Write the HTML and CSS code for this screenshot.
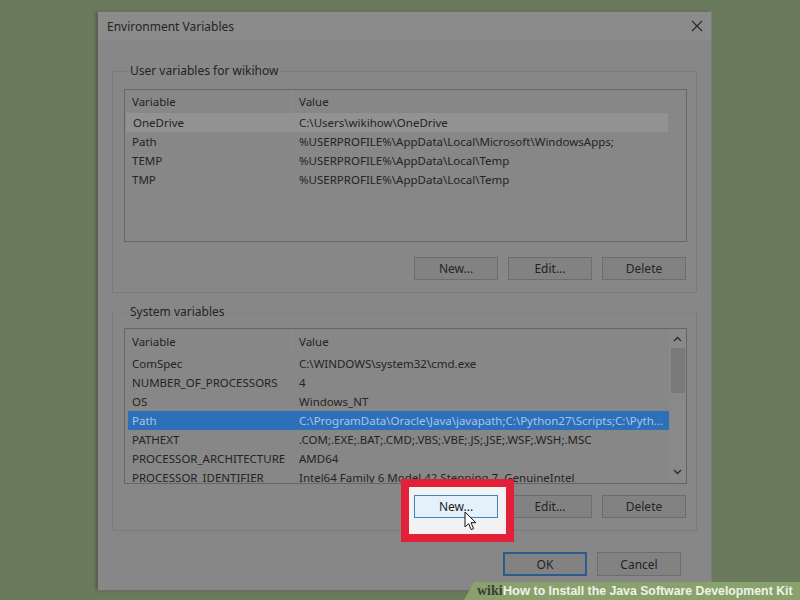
FILE: index.html
```html
<!DOCTYPE html>
<html lang="en">
<head>
  <meta charset="UTF-8" />
  <meta name="viewport" content="width=device-width, initial-scale=1.0" />
  <title>Environment Variables</title>
  <link rel="stylesheet" href="styles.css">
</head>
<body>

  <div class="dialog">
    <div class="titlebar">
      <span>Environment Variables</span>
      <svg class="close" width="12" height="12" viewBox="0 0 12 12">
        <path d="M1 1 L11 11 M11 1 L1 11" stroke="#2b2b2b" stroke-width="1.2" fill="none" />
      </svg>
    </div>

    <div class="content">
      <fieldset class="group">
        <legend>User variables for wikihow</legend>
        <div class="listbox user-list">
          <div class="row head">
            <span class="col-var">Variable</span>
            <span class="col-val">Value</span>
          </div>
          <div class="row hover">
            <span class="col-var">OneDrive</span>
            <span class="col-val">C:\Users\wikihow\OneDrive</span>
          </div>
          <div class="row">
            <span class="col-var">Path</span>
            <span class="col-val">%USERPROFILE%\AppData\Local\Microsoft\WindowsApps;</span>
          </div>
          <div class="row">
            <span class="col-var">TEMP</span>
            <span class="col-val">%USERPROFILE%\AppData\Local\Temp</span>
          </div>
          <div class="row">
            <span class="col-var">TMP</span>
            <span class="col-val">%USERPROFILE%\AppData\Local\Temp</span>
          </div>
        </div>
        <div class="buttons">
          <button>New...</button>
          <button>Edit...</button>
          <button>Delete</button>
        </div>
      </fieldset>

      <fieldset class="group system">
        <legend>System variables</legend>
        <div class="listbox system-list">
          <div class="rows">
            <div class="row head">
              <span class="col-var">Variable</span>
              <span class="col-val">Value</span>
            </div>
            <div class="row">
              <span class="col-var">ComSpec</span>
              <span class="col-val">C:\WINDOWS\system32\cmd.exe</span>
            </div>
            <div class="row">
              <span class="col-var">NUMBER_OF_PROCESSORS</span>
              <span class="col-val">4</span>
            </div>
            <div class="row">
              <span class="col-var">OS</span>
              <span class="col-val">Windows_NT</span>
            </div>
            <div class="row selected">
              <span class="col-var">Path</span>
              <span class="col-val">C:\ProgramData\Oracle\Java\javapath;C:\Python27\Scripts;C:\Pyth...</span>
            </div>
            <div class="row">
              <span class="col-var">PATHEXT</span>
              <span class="col-val">.COM;.EXE;.BAT;.CMD;.VBS;.VBE;.JS;.JSE;.WSF;.WSH;.MSC</span>
            </div>
            <div class="row">
              <span class="col-var">PROCESSOR_ARCHITECTURE</span>
              <span class="col-val">AMD64</span>
            </div>
            <div class="row">
              <span class="col-var">PROCESSOR_IDENTIFIER</span>
              <span class="col-val">Intel64 Family 6 Model 42 Stepping 7, GenuineIntel</span>
            </div>
          </div>
          <div class="scrollbar">
            <svg width="9" height="6" viewBox="0 0 9 6"><path d="M1 5 L4.5 1.5 L8 5" stroke="#2b2b2b" stroke-width="1.3" fill="none" /></svg>
            <div class="track"><div class="thumb"></div></div>
            <svg width="9" height="6" viewBox="0 0 9 6"><path d="M1 1 L4.5 4.5 L8 1" stroke="#2b2b2b" stroke-width="1.3" fill="none" /></svg>
          </div>
        </div>
        <div class="buttons">
          <span class="highlight">
            <button class="focus">New...</button>
            <svg class="cursor" width="13" height="20" viewBox="0 0 13 20">
              <path d="M1 1 L1 16 L4.6 12.6 L7.2 18.6 L9.6 17.6 L7 11.7 L11.8 11.7 Z" fill="#ffffff" stroke="#111111" stroke-width="1" stroke-linejoin="round" />
            </svg>
          </span>
          <button>Edit...</button>
          <button>Delete</button>
        </div>
      </fieldset>

      <div class="footer">
        <button class="default">OK</button>
        <button>Cancel</button>
      </div>
    </div>
  </div>

  <div class="watermark"><b class="wiki">wiki</b><b>How</b> to Install the Java Software Development Kit</div>

</body>
</html>
```

FILE: styles.css
```css
body {
  margin: 0;
  width: 800px;
  height: 600px;
  overflow: hidden;
  position: relative;
  background-color: #6a7a5c;
  font-family: "Noto Sans", "Open Sans", sans-serif;
  font-size: 12px;
  color: #242424;
}
.dialog {
  margin: 12px 0 0 98px;
  width: 613px;
  height: 578px;
  background-color: #878787;
  box-shadow: -2px 0 3px rgba(40, 45, 35, 0.45), 0 0 0 1px #7d7d7d;
  display: flex;
  flex-direction: column;
}
.titlebar {
  height: 28px;
  padding: 0 8px 0 9px;
  display: flex;
  align-items: center;
  justify-content: space-between;
  background-color: #8b8b8b;
}
.content {
  padding: 23px 14px 0 14px;
  display: flex;
  flex-direction: column;
}
.group {
  margin: 0;
  padding: 10px 9px 12px 11px;
  border: 1px solid #7b7b7b;
}
.group legend {
  padding: 0 2px;
  margin-left: 4px;
  line-height: 16px;
}
.system {
  margin-top: 11px;
  padding-top: 8px;
  padding-bottom: 12px;
  border-top-color: #838383;
}
.listbox {
  border: 1px solid #666666;
  background-color: #878787;
  overflow: hidden;
  position: relative;
  font-size: 11.5px;
}
.user-list {
  height: 151px;
}
.system-list {
  height: 154px;
  display: flex;
}
.rows {
  flex: 1;
}
.row {
  display: grid;
  grid-template-columns: 167px 1fr;
  height: 19px;
  align-items: center;
  white-space: nowrap;
  margin-right: 18px;
}
.row span {
  padding-left: 7px;
  overflow: hidden;
}
.row.head,
.row.head .col-var {
  height: 23px;
  line-height: 23px;
}
.row.head .col-var {
  border-right: 1px solid #8e8e8e;
}
.system-list .row.head,
.system-list .row.head .col-var {
  height: 25px;
  line-height: 25px;
}
.row.hover {
  background-color: #929292;
  margin-left: 1px;
  grid-template-columns: 166px 1fr;
}
.row.selected {
  background-color: #2e6fba;
  color: #a7c4e6;
  margin-left: 3px;
  grid-template-columns: 164px 1fr;
}
.row.selected .col-var {
  padding-left: 4px;
}
.system-list .row {
  margin-right: 0;
}
.scrollbar {
  width: 17px;
  display: flex;
  flex-direction: column;
  align-items: center;
  padding-top: 7px;
  background-color: #898989;
}
.track {
  flex: 1;
  width: 100%;
  padding-top: 6px;
}
.thumb {
  margin: 0 auto;
  width: 14px;
  height: 45px;
  background-color: #797979;
}
.scrollbar svg:last-child {
  margin-bottom: 8px;
}
.buttons {
  margin-top: 15px;
  display: flex;
  justify-content: flex-end;
  gap: 10px;
  padding-right: 1px;
}
.system .buttons {
  margin-top: 11px;
}
button {
  width: 84px;
  height: 23px;
  padding: 0;
  font: inherit;
  color: #242424;
  background-color: #828282;
  border: 1px solid #6d6d6d;
}
.highlight {
  position: relative;
  display: flex;
}
.highlight::before {
  content: "";
  position: absolute;
  left: -13px;
  top: -16px;
  right: -16px;
  bottom: -24px;
  border: 8px solid #e2203a;
  background-color: #f2f2f2;
}
.highlight button.focus {
  position: relative;
  background-color: #e4f0fa;
  border-color: #3f82bd;
  color: #1e1e1e;
}
.cursor {
  position: absolute;
  left: 50px;
  top: 16px;
}
.footer {
  margin-top: 21px;
  display: flex;
  justify-content: flex-end;
  gap: 10px;
  padding-right: 16px;
}
.footer button {
  height: 24px;
}
.footer button.default {
  border: 2px solid #2c5b8e;
}
.watermark {
  position: absolute;
  left: 464px;
  bottom: 0;
  width: 336px;
  height: 18px;
  padding-left: 13px;
  box-sizing: border-box;
  background-color: #89a26d;
  clip-path: polygon(10px 0, 100% 0, 100% 100%, 0 100%);
  font-family: "Liberation Sans", Arial, sans-serif;
  font-size: 12.3px;
  font-weight: bold;
  line-height: 18px;
  color: #eef3e6;
  white-space: nowrap;
}
.watermark b {
  font-size: 13px;
}
.watermark .wiki {
  font-family: "Liberation Serif", serif;
  font-size: 14px;
  color: #3d3d3d;
}
```
